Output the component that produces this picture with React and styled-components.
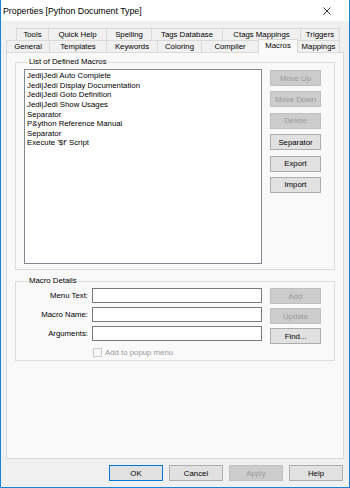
import React from 'react';
import styled, { createGlobalStyle, css } from 'styled-components';

const GlobalStyle = createGlobalStyle`
  html, body {
    margin: 0;
    padding: 0;
    background: #f0f0f0;
  }
  * {
    box-sizing: border-box;
  }
`;

const Window = styled.div`
  width: 350px;
  height: 488px;
  display: flex;
  flex-direction: column;
  background: #f0f0f0;
  border: 1px solid #1883d7;
  border-top: none;
  font-family: "Liberation Sans", Arial, sans-serif;
  font-size: 7.8px;
  color: #000;
  overflow: hidden;
`;

const TitleBar = styled.div`
  height: 21px;
  flex: 0 0 21px;
  background: #fff;
  display: flex;
  align-items: center;
  justify-content: space-between;
  padding: 0 18px 0 2px;
  font-size: 8.8px;
`;

const CloseIcon = styled.svg`
  width: 8px;
  height: 8px;
`;

const Body = styled.div`
  flex: 1;
  display: flex;
  flex-direction: column;
  padding: 7px 5px 0 5px;
`;

const TabRow = styled.div`
  display: flex;
  height: 12px;
  margin-left: ${p => p.indent || 0}px;
  align-items: flex-end;
`;

const Tab = styled.div`
  width: ${p => p.w}px;
  height: 12px;
  display: flex;
  align-items: center;
  justify-content: center;
  border: 1px solid #d9d9d9;
  border-right: none;
  border-bottom: none;
  background: #f0f0f0;
  white-space: nowrap;
  &:last-child {
    border-right: 1px solid #d9d9d9;
  }
  ${p => p.active && css`
    height: 14px;
    margin-bottom: -1px;
    background: #fafafa;
    border-right: 1px solid #d9d9d9;
    position: relative;
    z-index: 2;
    padding-bottom: 2px;
    & + div {
      border-left: none;
    }
  `}
`;

const Panel = styled.div`
  height: 407px;
  border: 1px solid #d9d9d9;
  background: #f9f9f9;
  padding: 4px 8px 0 8px;
  display: flex;
  flex-direction: column;
  gap: 6px;
`;

const Group = styled.fieldset`
  margin: 0;
  border: 1px solid #dcdcdc;
  padding: ${p => p.pad || '2px 9px 5px 8px'};
  min-width: 0;
`;

const Legend = styled.legend`
  margin-left: 4px;
  padding: 0 1px;
  line-height: 10px;
  height: 10px;
`;

const ListSection = styled.div`
  display: grid;
  grid-template-columns: 238px 51px;
  column-gap: 8px;
  align-items: start;
`;

const ListBox = styled.div`
  height: 195px;
  background: #fff;
  border: 1px solid #828790;
  padding: 1px 2px;
  display: flex;
  flex-direction: column;
`;

const ListItem = styled.div`
  line-height: 9.65px;
  height: 9.65px;
  white-space: nowrap;
`;

const ButtonColumn = styled.div`
  display: flex;
  flex-direction: column;
  gap: ${p => p.gap || 5.4}px;
  padding-top: ${p => p.top || 0}px;
`;

const Button = styled.div`
  width: ${p => p.w || 51}px;
  height: ${p => p.h || 16}px;
  display: flex;
  align-items: center;
  justify-content: center;
  background: #e1e1e1;
  border: 1px solid #adadad;
  color: #000;
  white-space: nowrap;
  ${p => p.disabled && css`
    background: #cccccc;
    border-color: #bfbfbf;
    color: #9a9a9a;
  `}
  ${p => p.primary && css`
    border-color: #0078d7;
    box-shadow: inset 0 0 0 1px #e1e1e1;
  `}
`;

const DetailsSection = styled.div`
  display: flex;
  gap: 8px;
`;

const Form = styled.div`
  display: grid;
  grid-template-columns: 64px 170px;
  grid-template-rows: 15px 15px 15px 12px;
  column-gap: 4px;
  row-gap: 4px;
  align-items: center;
`;

const Label = styled.label`
  text-align: right;
  white-space: nowrap;
`;

const Input = styled.div`
  height: 15px;
  background: #fff;
  border: 1px solid #7a7a7a;
`;

const CheckRow = styled.div`
  grid-column: 2;
  display: flex;
  align-items: center;
  gap: 3px;
  margin-top: 2px;
  color: #9a9a9a;
`;

const CheckBox = styled.span`
  width: 9px;
  height: 9px;
  margin-left: 1px;
  border: 1px solid #cccccc;
  background: #f9f9f9;
`;

const Footer = styled.div`
  display: flex;
  justify-content: flex-end;
  gap: 6px;
  padding: 6px 1px 0 0;
`;

const macros = [
  'Jedi|Jedi Auto Complete',
  'Jedi|Jedi Display Documentation',
  'Jedi|Jedi Goto Definition',
  'Jedi|Jedi Show Usages',
  'Separator',
  'P&ython Reference Manual',
  'Separator',
  "Execute '$f' Script",
];

const topTabs = [
  ['Tools', 32], ['Quick Help', 58], ['Spelling', 45],
  ['Tags Database', 71], ['Ctags Mappings', 78], ['Triggers', 40],
];

const bottomTabs = [
  ['General', 43], ['Templates', 57], ['Keywords', 51], ['Coloring', 44],
  ['Compiler', 57], ['Macros', 40], ['Mappings', 42],
];

export default function App() {
  return (
    <>
      <GlobalStyle />
      <Window>
        <TitleBar>
          <span>Properties [Python Document Type]</span>
          <CloseIcon viewBox="0 0 8 8">
            <path d="M0.5 0.5 L7.5 7.5 M7.5 0.5 L0.5 7.5" stroke="#222" strokeWidth="0.9" fill="none" />
          </CloseIcon>
        </TitleBar>
        <Body>
          <TabRow indent={10}>
            {topTabs.map(([t, w]) => <Tab key={t} w={w}>{t}</Tab>)}
          </TabRow>
          <TabRow>
            {bottomTabs.map(([t, w]) => (
              <Tab key={t} w={w} active={t === 'Macros'}>{t}</Tab>
            ))}
          </TabRow>
          <Panel>
            <Group>
              <Legend>List of Defined Macros</Legend>
              <ListSection>
                <ListBox>
                  {macros.map((m, i) => <ListItem key={i}>{m}</ListItem>)}
                </ListBox>
                <ButtonColumn top={1}>
                  <Button disabled>Move Up</Button>
                  <Button disabled>Move Down</Button>
                  <Button disabled>Delete</Button>
                  <Button>Separator</Button>
                  <Button>Export</Button>
                  <Button>Import</Button>
                </ButtonColumn>
              </ListSection>
            </Group>
            <Group pad="2px 9px 3px 8px">
              <Legend>Macro Details</Legend>
              <DetailsSection>
                <Form>
                  <Label>Menu Text:</Label>
                  <Input />
                  <Label>Macro Name:</Label>
                  <Input />
                  <Label>Arguments:</Label>
                  <Input />
                  <CheckRow>
                    <CheckBox />
                    <span>Add to popup menu</span>
                  </CheckRow>
                </Form>
                <ButtonColumn gap={4}>
                  <Button disabled>Add</Button>
                  <Button disabled>Update</Button>
                  <Button>Find...</Button>
                </ButtonColumn>
              </DetailsSection>
            </Group>
          </Panel>
          <Footer>
            <Button w={54} primary>OK</Button>
            <Button w={54}>Cancel</Button>
            <Button w={54} disabled>Apply</Button>
            <Button w={54}>Help</Button>
          </Footer>
        </Body>
      </Window>
    </>
  );
}
